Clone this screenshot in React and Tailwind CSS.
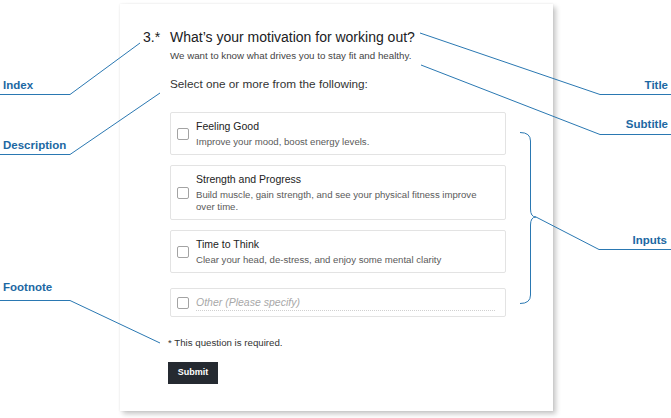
const OPTIONS = [
  {
    title: "Feeling Good",
    desc: "Improve your mood, boost energy levels.",
  },
  {
    title: "Strength and Progress",
    desc: "Build muscle, gain strength, and see your physical fitness improve over time.",
  },
  {
    title: "Time to Think",
    desc: "Clear your head, de-stress, and enjoy some mental clarity",
  },
];

const labelClass =
  "absolute text-[11.5px] font-bold leading-[14px] text-[#1c68a3]";

function Checkbox() {
  return (
    <span className="h-[12px] w-[12px] shrink-0 rounded-[2px] border border-[#a3a3a3] bg-white" />
  );
}

function Annotations() {
  return (
    <>
      <svg
        className="pointer-events-none absolute left-0 top-0"
        width="671"
        height="418"
        viewBox="0 0 671 418"
        fill="none"
        stroke="#2a78b2"
        strokeWidth="1"
      >
        {/* left side */}
        <polyline points="0,94.5 70,94.5 140,43" />
        <polyline points="0,154.5 70,154.5 160,93" />
        <polyline points="0,300.5 70,300.5 160,343" />
        {/* right side */}
        <polyline points="671,94.5 600,94.5 420,33" />
        <polyline points="671,134.5 600,134.5 421,65" />
        <polyline points="671,249.5 599,249.5 536,217" />
        {/* brace round the inputs */}
        <path d="M520,132.5 Q530.5,132.5 530.5,141 L530.5,209 Q530.5,217 536,217 Q530.5,217 530.5,225 L530.5,295 Q530.5,303.5 520,303.5" />
      </svg>

      <span className={`${labelClass} left-[3px] top-[78px]`}>Index</span>
      <span className={`${labelClass} left-[3px] top-[138px]`}>Description</span>
      <span className={`${labelClass} left-[3px] top-[280px]`}>Footnote</span>
      <span className={`${labelClass} right-[3px] top-[78px]`}>Title</span>
      <span className={`${labelClass} right-[3px] top-[117px]`}>Subtitle</span>
      <span className={`${labelClass} right-[4px] top-[233px]`}>Inputs</span>
    </>
  );
}

function App() {
  return (
    <div
      className="relative h-[418px] w-[671px] overflow-hidden bg-white"
      style={{ fontFamily: '"Liberation Sans", Arial, sans-serif' }}
    >
      <div className="pl-[120px] pt-[4px]">
        <div className="h-[407px] w-[433px] bg-white pl-[23px] pt-[23px] shadow-[0_0_2px_rgba(0,0,0,0.08),3px_3px_5px_rgba(0,0,0,0.22)]">
          <div className="flex text-[14px] leading-[20px] text-[#202124]">
            <span className="w-[27px] shrink-0">3.*</span>
            <h1>What’s your motivation for working out?</h1>
          </div>

          <div className="pl-[27px]">
            <p className="mt-[2px] text-[9.75px] leading-[14px] text-[#444]">
              We want to know what drives you to stay fit and healthy.
            </p>
            <p className="mt-[13px] text-[11.75px] leading-[16px] text-[#333]">
              Select one or more from the following:
            </p>

            <div className="mt-[20px] flex w-[336px] flex-col gap-[10px]">
              {OPTIONS.map((opt) => (
                <label
                  key={opt.title}
                  className="flex items-center rounded-[2px] border border-[#e3e3e3] pb-[6px] pl-[6px] pr-[20px] pt-[6px]"
                >
                  <Checkbox />
                  <div className="ml-[7px]">
                    <div className="text-[10.5px] leading-[14px] text-[#222]">
                      {opt.title}
                    </div>
                    <div className="mt-[3px] text-[9.6px] leading-[12px] text-[#5a5a5a]">
                      {opt.desc}
                    </div>
                  </div>
                </label>
              ))}

              <label className="mt-[5px] flex h-[29px] items-center rounded-[2px] border border-[#e3e3e3] pl-[6px] pr-[10px]">
                <Checkbox />
                <input
                  type="text"
                  placeholder="Other (Please specify)"
                  className="ml-[7px] h-[16px] flex-1 border-b border-dotted border-[#d0d0d0] bg-transparent pb-[1px] text-[10.5px] leading-[14px] italic text-[#333] outline-none placeholder:text-[#a8a8a8]"
                />
              </label>
            </div>
          </div>

          <div className="pl-[25px]">
            <p className="mt-[19px] text-[9.7px] leading-[14px] text-[#333]">
              * This question is required.
            </p>
            <button
              type="button"
              className="mt-[12px] h-[22px] w-[50px] bg-[#252a31] text-[9px] font-bold text-white"
            >
              Submit
            </button>
          </div>
        </div>
      </div>

      <Annotations />
    </div>
  );
}

export default App;
